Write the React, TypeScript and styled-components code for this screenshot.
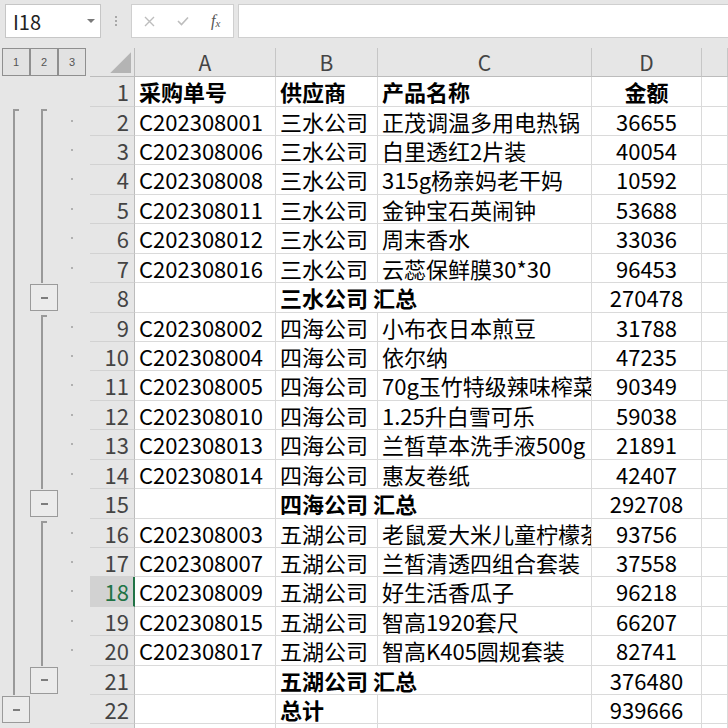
import React from "react";
import styled, { createGlobalStyle, css } from "styled-components";

const GlobalStyle = createGlobalStyle`
  html, body {
    margin: 0;
    padding: 0;
    background: #e6e6e6;
  }
  body {
    font-family: "Noto Sans CJK SC", "Noto Sans", sans-serif;
  }
`;

const COLS = "90px 45px 141px 102px 214px 110px 1fr";
const GRID = "#dadada";
const HEAD_LINE = "#bcbcbc";

type SlotKind = "start" | "line" | "minus" | "dot" | "none";

type RowData = {
  n: number;
  a?: string;
  b?: string;
  c?: string;
  d?: string;
  bold?: boolean;
  spanB?: boolean;
  outline: [SlotKind, SlotKind, SlotKind];
};

const detail = (first: boolean, firstL1 = false): [SlotKind, SlotKind, SlotKind] => [
  firstL1 ? "start" : "line",
  first ? "start" : "line",
  "dot",
];

const rows: RowData[] = [
  { n: 1, a: "采购单号", b: "供应商", c: "产品名称", d: "金额", bold: true, outline: ["none", "none", "none"] },
  { n: 2, a: "C202308001", b: "三水公司", c: "正茂调温多用电热锅", d: "36655", outline: detail(true, true) },
  { n: 3, a: "C202308006", b: "三水公司", c: "白里透红2片装", d: "40054", outline: detail(false) },
  { n: 4, a: "C202308008", b: "三水公司", c: "315g杨亲妈老干妈", d: "10592", outline: detail(false) },
  { n: 5, a: "C202308011", b: "三水公司", c: "金钟宝石英闹钟", d: "53688", outline: detail(false) },
  { n: 6, a: "C202308012", b: "三水公司", c: "周末香水", d: "33036", outline: detail(false) },
  { n: 7, a: "C202308016", b: "三水公司", c: "云蕊保鲜膜30*30", d: "96453", outline: detail(false) },
  { n: 8, b: "三水公司 汇总", d: "270478", bold: true, spanB: true, outline: ["line", "minus", "none"] },
  { n: 9, a: "C202308002", b: "四海公司", c: "小布衣日本煎豆", d: "31788", outline: detail(true) },
  { n: 10, a: "C202308004", b: "四海公司", c: "依尔纳", d: "47235", outline: detail(false) },
  { n: 11, a: "C202308005", b: "四海公司", c: "70g玉竹特级辣味榨菜", d: "90349", outline: detail(false) },
  { n: 12, a: "C202308010", b: "四海公司", c: "1.25升白雪可乐", d: "59038", outline: detail(false) },
  { n: 13, a: "C202308013", b: "四海公司", c: "兰皙草本洗手液500g", d: "21891", outline: detail(false) },
  { n: 14, a: "C202308014", b: "四海公司", c: "惠友卷纸", d: "42407", outline: detail(false) },
  { n: 15, b: "四海公司 汇总", d: "292708", bold: true, spanB: true, outline: ["line", "minus", "none"] },
  { n: 16, a: "C202308003", b: "五湖公司", c: "老鼠爱大米儿童柠檬茶", d: "93756", outline: detail(true) },
  { n: 17, a: "C202308007", b: "五湖公司", c: "兰皙清透四组合套装", d: "37558", outline: detail(false) },
  { n: 18, a: "C202308009", b: "五湖公司", c: "好生活香瓜子", d: "96218", outline: detail(false) },
  { n: 19, a: "C202308015", b: "五湖公司", c: "智高1920套尺", d: "66207", outline: detail(false) },
  { n: 20, a: "C202308017", b: "五湖公司", c: "智高K405圆规套装", d: "82741", outline: detail(false) },
  { n: 21, b: "五湖公司 汇总", d: "376480", bold: true, spanB: true, outline: ["line", "minus", "none"] },
  { n: 22, b: "总计", d: "939666", bold: true, outline: ["minus", "none", "none"] },
  { n: 23, outline: ["none", "none", "none"] },
];

const ACTIVE_ROW = 18;

const Page = styled.div`
  width: 728px;
  height: 728px;
  overflow: hidden;
  display: flex;
  flex-direction: column;
  background: #e6e6e6;
`;

const TopBar = styled.div`
  display: flex;
  align-items: center;
  height: 34px;
  padding: 4px 0 0 5px;
  flex-shrink: 0;
`;

const NameBox = styled.div`
  width: 96px;
  height: 34px;
  box-sizing: border-box;
  background: #fff;
  border: 1px solid #c6c6c6;
  display: flex;
  align-items: center;
  justify-content: space-between;
  padding: 0 5px 0 7px;
  font-size: 20px;
  color: #222;
`;

const Caret = styled.span`
  width: 0;
  height: 0;
  border-left: 4px solid transparent;
  border-right: 4px solid transparent;
  border-top: 4px solid #7a7a7a;
`;

const Grip = styled.div`
  width: 30px;
  display: flex;
  flex-direction: column;
  align-items: center;
  gap: 2px;
  span {
    width: 2px;
    height: 2px;
    background: #a8a8a8;
  }
`;

const FormulaButtons = styled.div`
  width: 103px;
  height: 34px;
  box-sizing: border-box;
  background: #fff;
  border: 1px solid #cfcfcf;
  display: flex;
  align-items: center;
  gap: 22px;
  padding-left: 12px;
`;

const Fx = styled.span`
  font-family: "Liberation Serif", serif;
  font-style: italic;
  font-size: 16px;
  color: #555;
  sub {
    font-size: 11px;
    vertical-align: -1px;
  }
`;

const FormulaInput = styled.div`
  flex: 1;
  height: 34px;
  margin-left: 4px;
  box-sizing: border-box;
  background: #fff;
  border: 1px solid #cfcfcf;
  border-right: none;
`;

const Sheet = styled.div`
  margin-top: 10px;
  display: flex;
  flex-direction: column;
`;

const HeaderRow = styled.div`
  display: grid;
  grid-template-columns: ${COLS};
  height: 29.2px;
`;

const Row = styled.div`
  display: grid;
  grid-template-columns: ${COLS};
  height: 29.43px;
  flex-shrink: 0;
`;

const OutlineHead = styled.div`
  display: flex;
  padding-left: 2px;
`;

const LevelButton = styled.div`
  width: 28px;
  height: 28px;
  box-sizing: border-box;
  border: 1px solid #8f8f8f;
  background: #e2e2e2;
  display: flex;
  align-items: center;
  justify-content: center;
  font-family: "Liberation Sans", sans-serif;
  font-size: 11px;
  color: #555;
`;

const Corner = styled.div`
  position: relative;
  box-sizing: border-box;
  border-right: 1px solid ${HEAD_LINE};
  border-bottom: 1px solid ${HEAD_LINE};
  &::after {
    content: "";
    position: absolute;
    right: 3px;
    bottom: 3px;
    width: 21px;
    height: 21px;
    background: #b4b4b4;
    clip-path: polygon(100% 0, 100% 100%, 0 100%);
  }
`;

const ColHeader = styled.div`
  box-sizing: border-box;
  border-right: 1px solid #c6c6c6;
  border-bottom: 1px solid ${HEAD_LINE};
  text-align: center;
  font-size: 21px;
  line-height: 28px;
  color: #444;
`;

const OutlineCell = styled.div`
  display: grid;
  grid-template-columns: 28px 28px 28px;
  padding-left: 2px;
`;

const Slot = styled.div<{ $kind: SlotKind }>`
  position: relative;
  display: flex;
  align-items: center;
  justify-content: center;
  ${({ $kind }) =>
    ($kind === "line" || $kind === "start") &&
    css`
      &::before {
        content: "";
        position: absolute;
        left: 11px;
        width: 2px;
        top: ${$kind === "start" ? "2px" : "0"};
        bottom: 0;
        background: #999;
      }
    `}
  ${({ $kind }) =>
    $kind === "start" &&
    css`
      &::after {
        content: "";
        position: absolute;
        left: 11px;
        top: 2px;
        width: 6px;
        height: 2px;
        background: #999;
      }
    `}
  ${({ $kind }) =>
    $kind === "dot" &&
    css`
      &::before {
        content: "";
        position: absolute;
        left: 13px;
        top: 13px;
        width: 2px;
        height: 2px;
        background: #b0b0b0;
      }
    `}
`;

const MinusButton = styled.div`
  width: 28px;
  height: 27px;
  box-sizing: border-box;
  border: 1px solid #9a9a9a;
  background: #ebebeb;
  display: flex;
  align-items: center;
  justify-content: center;
  &::before {
    content: "";
    width: 7px;
    height: 2px;
    background: #7d7d7d;
  }
`;

const RowHeader = styled.div<{ $active?: boolean }>`
  box-sizing: border-box;
  border-bottom: 1px solid #d2d2d2;
  border-right: ${({ $active }) => ($active ? "2px solid #217346" : `1px solid ${HEAD_LINE}`)};
  background: ${({ $active }) => ($active ? "#d2d2d2" : "transparent")};
  color: ${({ $active }) => ($active ? "#217346" : "#444")};
  text-align: right;
  padding-right: ${({ $active }) => ($active ? "4px" : "5px")};
  font-size: 22px;
  line-height: 28px;
`;

const Cell = styled.div<{ $align?: "left" | "center"; $bold?: boolean; $span?: number }>`
  box-sizing: border-box;
  background: #fff;
  border-right: 1px solid ${GRID};
  border-bottom: 1px solid ${GRID};
  padding: 0 4px;
  white-space: nowrap;
  overflow-x: clip;
  overflow-y: visible;
  font-size: 22px;
  line-height: 28px;
  color: #000;
  text-align: ${({ $align }) => $align ?? "left"};
  font-weight: ${({ $bold }) => ($bold ? 700 : 400)};
  ${({ $span }) => $span && css`grid-column: span ${$span};`}
`;

function TopToolbar() {
  return (
    <TopBar>
      <NameBox>
        <span>I18</span>
        <Caret />
      </NameBox>
      <Grip>
        <span />
        <span />
        <span />
      </Grip>
      <FormulaButtons>
        <svg width="11" height="11" viewBox="0 0 11 11">
          <path d="M1 1 L10 10 M10 1 L1 10" stroke="#bdbdbd" strokeWidth="1.4" />
        </svg>
        <svg width="12" height="10" viewBox="0 0 12 10">
          <path d="M1 5 L4.5 8.5 L11 1.5" stroke="#bdbdbd" strokeWidth="1.6" fill="none" />
        </svg>
        <Fx>
          f<sub>x</sub>
        </Fx>
      </FormulaButtons>
      <FormulaInput />
    </TopBar>
  );
}

function OutlineSlots({ kinds }: { kinds: [SlotKind, SlotKind, SlotKind] }) {
  return (
    <OutlineCell>
      {kinds.map((k, i) => (
        <Slot key={i} $kind={k}>
          {k === "minus" && <MinusButton />}
        </Slot>
      ))}
    </OutlineCell>
  );
}

export default function App() {
  return (
    <Page>
      <GlobalStyle />
      <TopToolbar />
      <Sheet>
        <HeaderRow>
          <OutlineHead>
            <LevelButton>1</LevelButton>
            <LevelButton>2</LevelButton>
            <LevelButton>3</LevelButton>
          </OutlineHead>
          <Corner />
          <ColHeader>A</ColHeader>
          <ColHeader>B</ColHeader>
          <ColHeader>C</ColHeader>
          <ColHeader>D</ColHeader>
          <ColHeader />
        </HeaderRow>
        {rows.map((r) => (
          <Row key={r.n}>
            <OutlineSlots kinds={r.outline} />
            <RowHeader $active={r.n === ACTIVE_ROW}>{r.n}</RowHeader>
            <Cell $bold={r.bold}>{r.a}</Cell>
            {r.spanB ? (
              <Cell $bold $span={2}>
                {r.b}
              </Cell>
            ) : (
              <>
                <Cell $bold={r.bold}>{r.b}</Cell>
                <Cell $bold={r.bold}>{r.c}</Cell>
              </>
            )}
            <Cell $align="center" $bold={r.n === 1}>
              {r.d}
            </Cell>
            <Cell />
          </Row>
        ))}
      </Sheet>
    </Page>
  );
}
